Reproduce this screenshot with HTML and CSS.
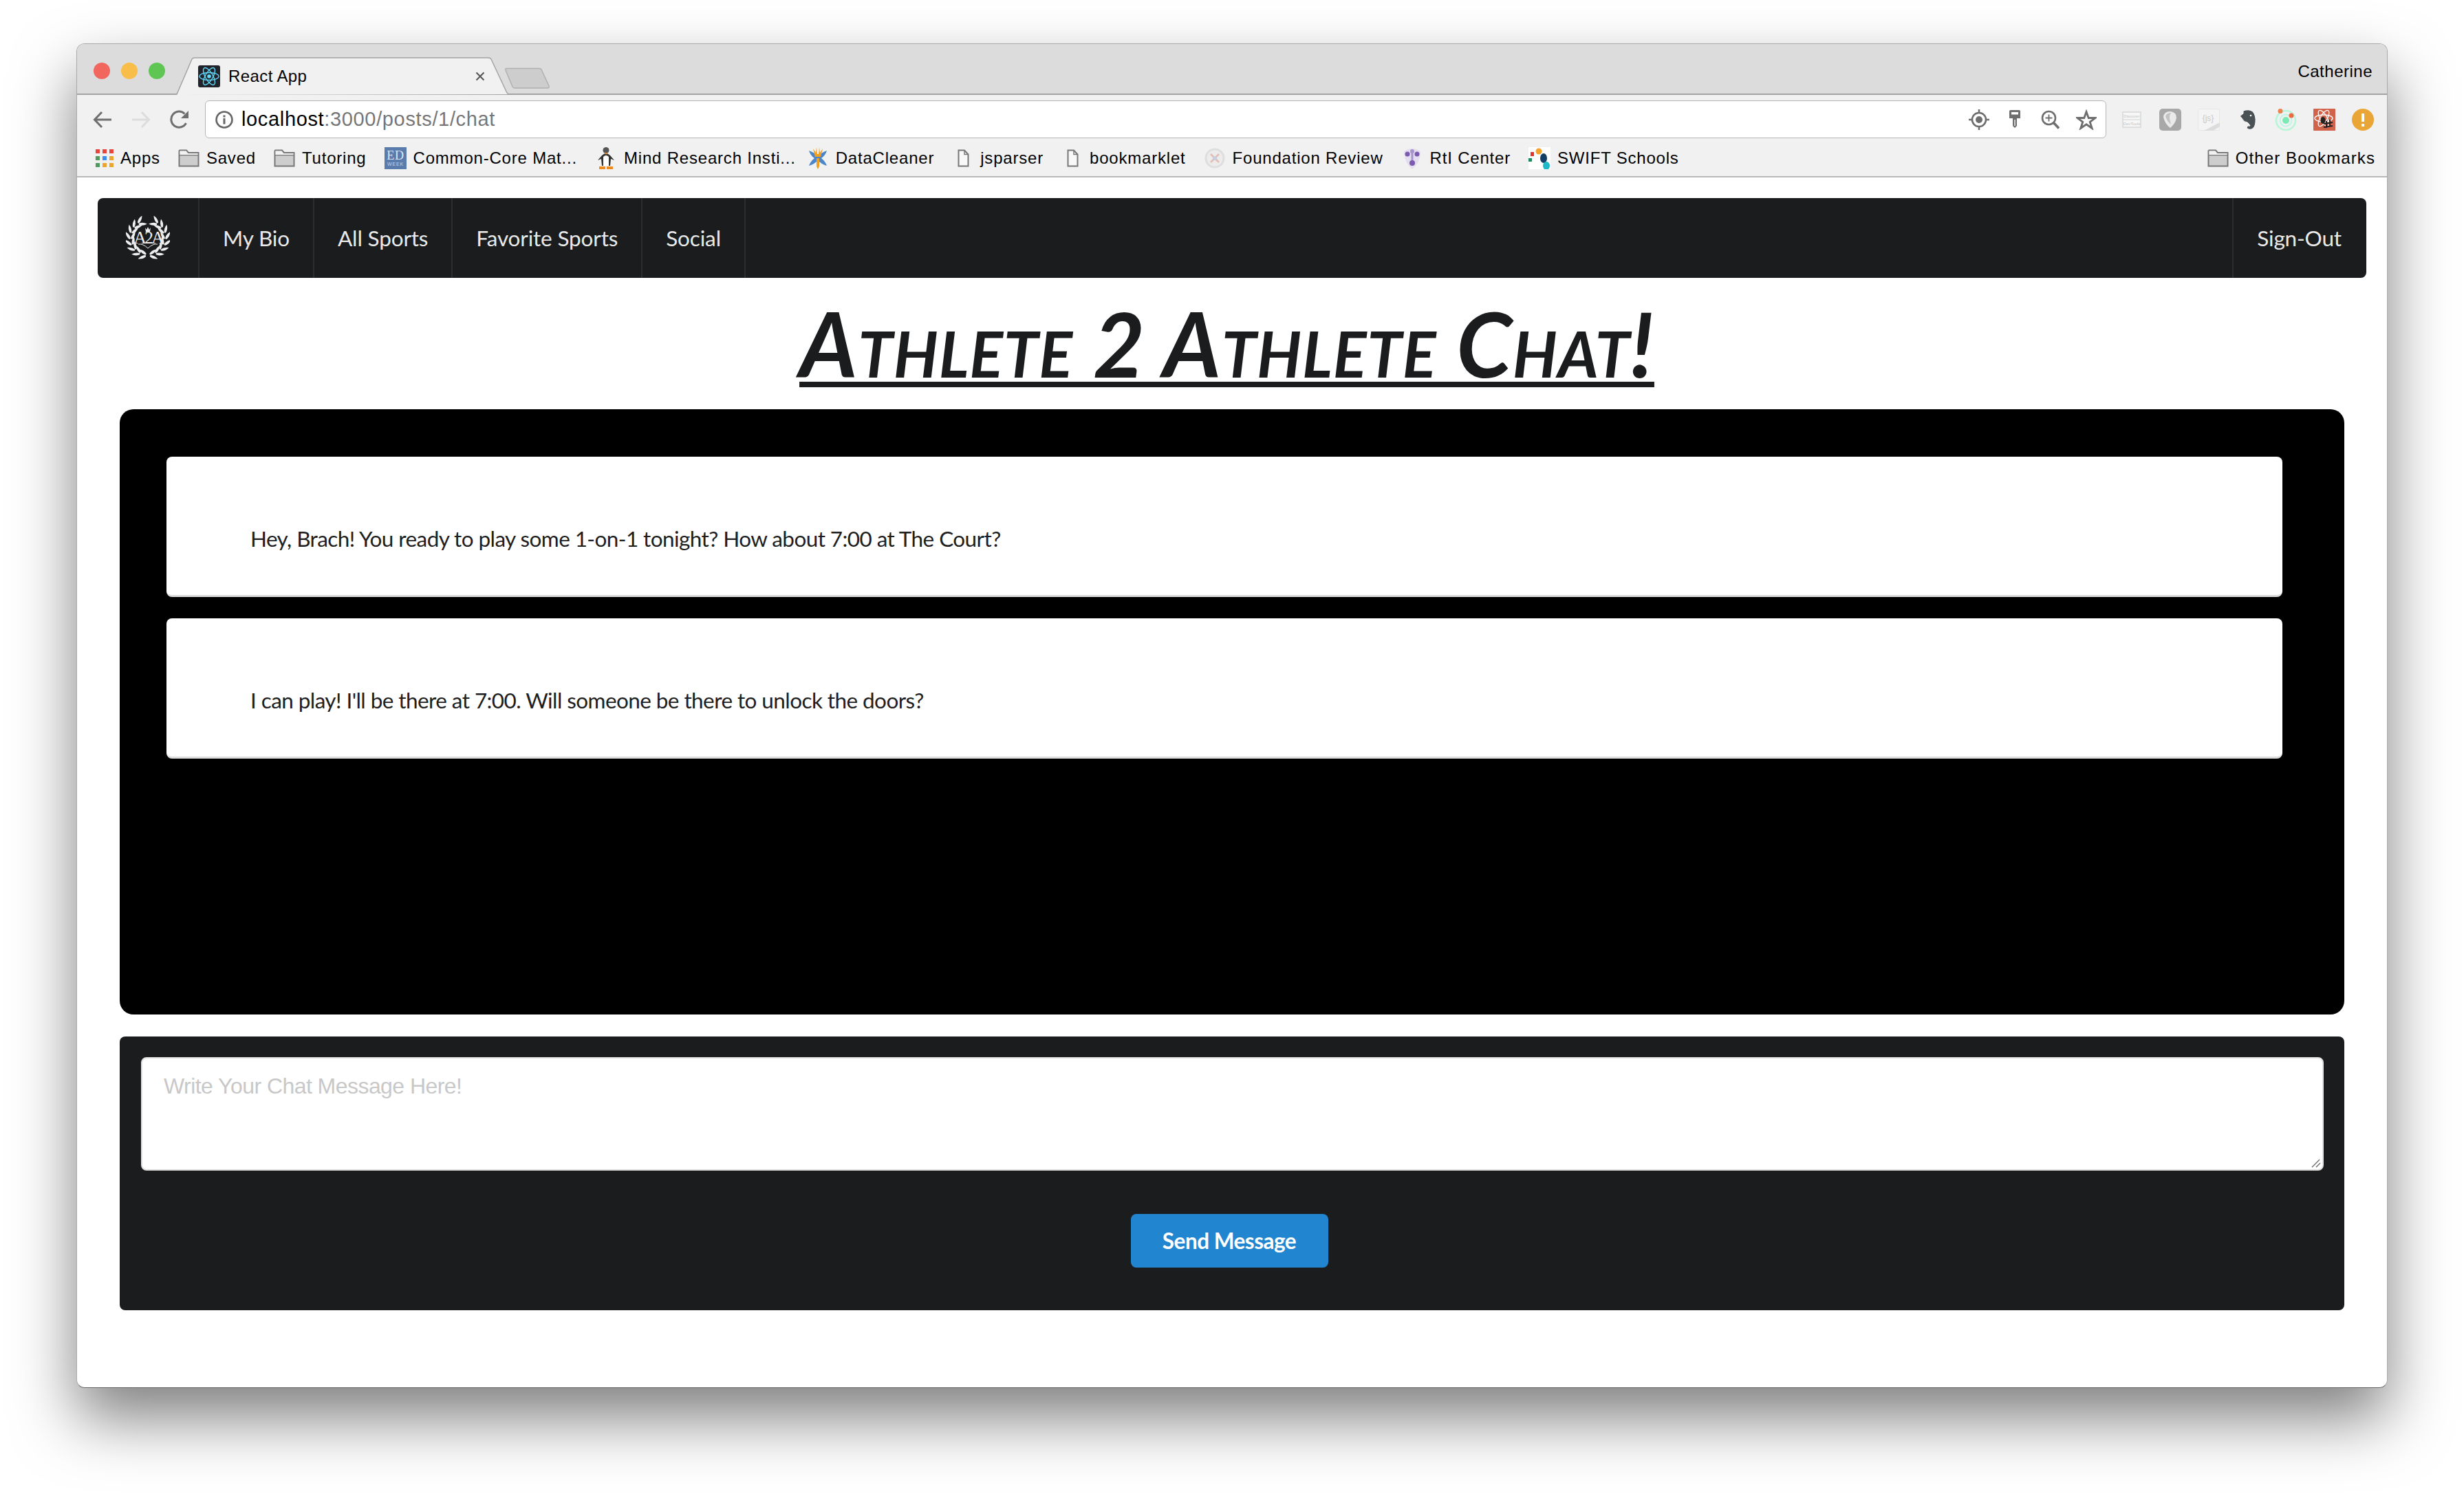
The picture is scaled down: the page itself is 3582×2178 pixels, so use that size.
FILE: index.html
```html
<!doctype html>
<html lang="en">
<head>
  <meta charset="utf-8">
  <title>React App</title>
  <link rel="stylesheet" href="styles.css">
</head>
<body>
  <div class="window">
    <div class="tabstrip">
      <div class="lights"><span class="light red"></span><span class="light yellow"></span><span class="light green"></span></div>
      <div class="tab">
        <svg class="tab-shape" viewBox="0 0 484 55"><path d="M0 55 L1 54 L23 3 Q24 1 27 1 H454 Q457 1 458 3 L480 50 Q482 54 484 54" fill="#f1f1f1" stroke="#a3a3a3" stroke-width="1.5"/></svg>
        <svg class="favicon" viewBox="0 0 32 32"><rect width="32" height="32" rx="3" fill="#20232a"/><g fill="none" stroke="#61dafb" stroke-width="1.4"><ellipse cx="16" cy="16" rx="14" ry="5.5"/><ellipse cx="16" cy="16" rx="14" ry="5.5" transform="rotate(60 16 16)"/><ellipse cx="16" cy="16" rx="14" ry="5.5" transform="rotate(120 16 16)"/></g><circle cx="16" cy="16" r="2.8" fill="#61dafb"/></svg>
        <span class="tab-title">React App</span>
        <svg class="tab-close" viewBox="0 0 14 14"><path d="M1.500 1.500L12.500 12.500M12.500 1.500L1.500 12.500" stroke="#555" stroke-width="2"/></svg>
      </div>
      <svg class="newtab" viewBox="0 0 65 31"><path d="M2 1.500H50Q52 1.500 53 3L64 27Q64.500 30 62 30H14Q12 30 11 28L1 4Q0.500 1.500 2 1.500Z" fill="#cdcdcd" stroke="#b0b0b0" stroke-width="1.500"/></svg>
      <span class="profile">Catherine</span>
    </div>

    <div class="toolbar">
      <svg class="navicon" viewBox="0 0 28 28"><path d="M27 14H3M13 3L2.500 14L13 25" fill="none" stroke="#6f6f6f" stroke-width="3"/></svg>
      <svg class="navicon" viewBox="0 0 28 28"><path d="M1 14H25M15 3L25.500 14L15 25" fill="none" stroke="#dcdcdc" stroke-width="3"/></svg>
      <svg class="navicon" viewBox="0 0 28 28"><path d="M23.500 19A11.500 11.500 0 1 1 21.500 5.500" fill="none" stroke="#6f6f6f" stroke-width="3"/><path d="M27 1V12H16Z" fill="#6f6f6f"/></svg>
      <div class="omnibox">
        <svg class="info" viewBox="0 0 26 26"><circle cx="13" cy="13" r="11.500" fill="none" stroke="#666" stroke-width="2.600"/><path d="M11.500 6.500h3v3h-3zM11.500 11h3v8.500h-3z" fill="#666"/></svg>
        <span class="url"><span class="url-host">localhost</span>:3000/posts/1/chat</span>
        <div class="omni-icons">
          <svg class="omni-icon" viewBox="0 0 30 30"><circle cx="15" cy="15" r="10" fill="none" stroke="#6e6e6e" stroke-width="2.600"/><circle cx="15" cy="15" r="5" fill="#6e6e6e"/><path d="M15 0v5M15 25v5M0 15h5M25 15h5" stroke="#6e6e6e" stroke-width="2.600"/></svg>
          <svg class="omni-icon" viewBox="0 0 30 30"><path d="M7 2.500Q7 1 9 1H21Q23 1 23 2.500V13H18V24L15 27L12 24V13H7Z" fill="#6e6e6e"/><rect x="10" y="4" width="10" height="3.500" fill="#fff"/><rect x="14" y="15" width="2" height="9" fill="#ccc"/></svg>
          <svg class="omni-icon" viewBox="0 0 30 30"><circle cx="12.500" cy="12.500" r="9.500" fill="none" stroke="#6e6e6e" stroke-width="2.600"/><path d="M12.500 7.500v10M7.500 12.500h10" stroke="#6e6e6e" stroke-width="1.800"/><path d="M19.500 19.500L27 27.500" stroke="#6e6e6e" stroke-width="3.500"/></svg>
          <svg class="omni-icon" viewBox="0 0 30 30"><path d="M15 3.500L18.200 12.500H28L20.200 18.300L23.200 27.500L15 21.800L6.800 27.500L9.800 18.300L2 12.500H11.800Z" fill="none" stroke="#6e6e6e" stroke-width="2.800"/></svg>
        </div>
      </div>
      <div class="extensions">
        <svg class="ext" viewBox="0 0 32 32"><rect x="3" y="5" width="26" height="22" fill="#f7f7f7" stroke="#dedede" stroke-width="2"/><path d="M3 16h26" stroke="#dedede" stroke-width="1.500"/><text x="16" y="13" class="ext-tiny">Discover</text><text x="16" y="24" class="ext-tiny">DevTools</text></svg>
        <svg class="ext" viewBox="0 0 32 32"><rect width="32" height="32" rx="5" fill="#a8a8a8"/><path d="M6 12Q7 4 16 4Q25 5 25 13Q24 21 16 28Q8 22 6 12Z" fill="#eaeaea"/><path d="M9 11Q11 6 17 6Q13 11 17 23Q11 18 9 11Z" fill="#c2c2c2"/></svg>
        <svg class="ext" viewBox="0 0 32 32"><rect x="0.500" y="0.500" width="31" height="31" rx="2" fill="#f4f4f4" stroke="#e6e6e6"/><text x="15" y="18" class="ext-js">{js}</text><path d="M9 32L32 20V26L22 32Z" fill="#dcdcdc"/></svg>
        <svg class="ext" viewBox="0 0 32 32"><path d="M10 3Q18 0 24 4Q29 10 28 20Q27 28 22 30Q16 31 15 27Q16 24 20 25Q18 21 16 20Q11 20 8 14Q7 12 5 11L10 7Z" fill="#4b5256" stroke="#fff" stroke-width="1"/><circle cx="21" cy="10" r="1.300" fill="#fff"/></svg>
        <svg class="ext" viewBox="0 0 32 32"><circle cx="16" cy="17" r="14" fill="none" stroke="#b5f5d8" stroke-width="2.500"/><circle cx="16" cy="17" r="8.500" fill="none" stroke="#bdf6e6" stroke-width="2"/><circle cx="16" cy="17" r="5" fill="#7ceab4"/><circle cx="8" cy="3.500" r="3.500" fill="#f0824f"/><circle cx="24" cy="10" r="3.500" fill="#ec6a3f"/></svg>
        <svg class="ext" viewBox="0 0 32 32"><rect width="32" height="32" rx="1" fill="#d1634a"/><g fill="none" stroke="#fff" stroke-width="1.300"><ellipse cx="15" cy="14" rx="13" ry="5"/><ellipse cx="15" cy="14" rx="13" ry="5" transform="rotate(60 15 14)"/><ellipse cx="15" cy="14" rx="13" ry="5" transform="rotate(120 15 14)"/></g><ellipse cx="14" cy="17" rx="3.500" ry="5" fill="#222"/><path d="M19 18v10M24 16v10M15 22l13-2M15 27l13-2" stroke="#222" stroke-width="2"/></svg>
        <svg class="ext" viewBox="0 0 32 32"><circle cx="16" cy="16" r="16" fill="#e9a636"/><path d="M14 7h4v12h-4zM14 22h4v4h-4z" fill="#fff"/></svg>
      </div>
    </div>

    <div class="bookmarks">
      <a class="mark">
        <svg class="mark-icon" viewBox="0 0 26 26"><path d="M0 0h6v6H0z M10 0h6v6h-6z M20 0h6v6h-6z" fill="#e8453c"/><path d="M0 10h6v6H0z M0 20h6v6H0z" fill="#4f9a5d"/><path d="M10 10h6v6h-6z" fill="#3d8ef0"/><path d="M20 10h6v6h-6z M10 20h6v6h-6z M20 20h6v6h-6z" fill="#eba52f"/></svg>
        Apps
      </a>
      <a class="mark"><svg class="mark-icon folder" viewBox="0 0 31 26"><use href="#folder"/></svg>Saved</a>
      <a class="mark"><svg class="mark-icon folder" viewBox="0 0 31 26"><use href="#folder"/></svg>Tutoring</a>
      <a class="mark">
        <svg class="mark-icon square" viewBox="0 0 32 32"><rect width="32" height="32" fill="#5a7cad"/><text x="16" y="18" class="ed-big">ED</text><text x="16" y="27" class="ed-small">WEEK</text></svg>
        Common-Core Mat...
      </a>
      <a class="mark">
        <svg class="mark-icon square" viewBox="0 0 32 32"><circle cx="16" cy="4.500" r="4.500" fill="#555"/><path d="M10 12Q16 6 22 12L28 19L23 17L22 27H10L9 17L4 19Z" fill="#333"/><path d="M12 14Q16 10 20 14V27H12Z" fill="#fff"/><path d="M14 8h4l-2 3z M6 28h9v4H6z M17 28h9v4h-9z" fill="#ee8a1e"/></svg>
        Mind Research Insti...
      </a>
      <a class="mark mark-tight">
        <svg class="mark-icon square" viewBox="0 0 32 32"><path d="M3 5Q12 8 16 14Q20 8 29 5Q27 12 21 16Q27 21 29 27Q20 24 16 19Q12 24 3 27Q5 21 11 16Q5 12 3 5Z" fill="#4a86c8"/><path d="M14 0l1 10h2l1-10 1 8 4-6-3 12h-8L9 2l4 6zM14 16h4v12l-2 4-2-4z" fill="#efa022"/></svg>
        DataCleaner
      </a>
      <a class="mark"><svg class="mark-icon page" viewBox="0 0 17 26"><use href="#page"/></svg>jsparser</a>
      <a class="mark"><svg class="mark-icon page" viewBox="0 0 17 26"><use href="#page"/></svg>bookmarklet</a>
      <a class="mark">
        <svg class="mark-icon square" viewBox="0 0 32 32"><circle cx="16" cy="16" r="13" fill="#ececec" stroke="#dedede" stroke-width="3"/><path d="M10 10L22 22M22 10L10 22" stroke="#e3bcb4" stroke-width="2.500"/><circle cx="16" cy="16" r="3" fill="#c5cfe0"/></svg>
        Foundation Review
      </a>
      <a class="mark">
        <svg class="mark-icon square" viewBox="0 0 32 32"><path d="M4 6Q16 -2 28 6Q28 22 16 32Q4 22 4 6Z" fill="#e4dcef"/><circle cx="9" cy="10" r="3.500" fill="#7a5bb0"/><circle cx="23" cy="10" r="3.500" fill="#7a5bb0"/><circle cx="16" cy="6" r="3" fill="#a593cb"/><circle cx="16" cy="23" r="4" fill="#7a5bb0"/><rect x="14.500" y="8" width="3" height="11" fill="#a593cb"/></svg>
        RtI Center
      </a>
      <a class="mark">
        <svg class="mark-icon square" viewBox="0 0 32 32"><rect width="32" height="32" fill="#fff"/><rect x="3" y="7" width="5" height="6" fill="#e0382e"/><rect x="0" y="16" width="5" height="5" fill="#1f8a5e"/><circle cx="15" cy="6" r="4.500" fill="#f4a42b"/><ellipse cx="22" cy="16" rx="5" ry="7" fill="#123f63"/><ellipse cx="26" cy="27" rx="5" ry="6" fill="#1fb8c8"/></svg>
        SWIFT Schools
      </a>
      <a class="mark mark-other"><svg class="mark-icon folder" viewBox="0 0 31 26"><use href="#folder"/></svg>Other Bookmarks</a>
    </div>

    <main class="page-body">
      <nav class="menu">
        <a class="menu-item menu-logo">
          <svg class="logo" viewBox="-32 -32 64 64">
            <defs>
              <path id="leaf" d="M0 0Q-6 -1 -10 -7Q-3 -7 1 -2Z"/>
              <g id="pair"><use href="#leaf"/><use href="#leaf" transform="scale(1 -1)"/></g>
              <g id="branch" fill="#eee">
                <use href="#pair" transform="rotate(32) translate(0 -25)"/>
                <use href="#pair" transform="rotate(52) translate(0 -25)"/>
                <use href="#pair" transform="rotate(72) translate(0 -25)"/>
                <use href="#pair" transform="rotate(92) translate(0 -25)"/>
                <use href="#pair" transform="rotate(112) translate(0 -25)"/>
                <use href="#pair" transform="rotate(132) translate(0 -25)"/>
                <use href="#pair" transform="rotate(152) translate(0 -25)"/>
                <use href="#pair" transform="rotate(172) translate(0 -25)"/>
              </g>
            </defs>
            <use href="#branch"/>
            <use href="#branch" transform="scale(-1 1)"/>
            <path d="M-4 -15l2 3 2 -4 2 4 2 -3 -1 6h-6z" fill="#eee"/>
            <text x="0" y="8" class="logo-text">A2A</text>
            <path d="M-14 9Q-7 8 0 15Q7 8 14 9" fill="none" stroke="#eee" stroke-width="1"/>
          </svg>
        </a>
        <a class="menu-item">My Bio</a>
        <a class="menu-item">All Sports</a>
        <a class="menu-item">Favorite Sports</a>
        <a class="menu-item">Social</a>
        <a class="menu-item menu-right">Sign-Out</a>
      </nav>

      <h1 class="chat-title">Athlete 2 Athlete Chat!</h1>

      <section class="messages">
        <div class="message">Hey, Brach! You ready to play some 1-on-1 tonight? How about 7:00 at The Court?</div>
        <div class="message">I can play! I'll be there at 7:00. Will someone be there to unlock the doors?</div>
      </section>

      <form class="chat-form">
        <div class="input-wrap">
          <textarea class="chat-input" placeholder="Write Your Chat Message Here!"></textarea>
          <svg class="grip" viewBox="0 0 14 14"><path d="M1 13L12 2M7 13L13 7" stroke="#666" stroke-width="1.300"/></svg>
        </div>
        <div class="form-actions"><button class="send" type="button">Send Message</button></div>
      </form>
    </main>
  </div>

  <svg class="defs" width="0" height="0">
    <defs>
      <g id="folder"><path d="M1.500 24.500V2.500Q1.500 1.500 2.500 1.500H12L15 5H29.500V24.500Z" fill="#cdcdcd" stroke="#777" stroke-width="2"/><path d="M1.500 8.500H29.500" stroke="#777" stroke-width="1.500"/><path d="M2.500 2.500H11.500L14 6H28.500V8H2.500Z" fill="#f2f2f2"/></g>
      <g id="page"><path d="M1.500 1.500H10L15.500 7.500V24.500H1.500Z" fill="#f8f8f8" stroke="#777" stroke-width="2"/><path d="M10 1.500V7.500H15.500" fill="none" stroke="#777" stroke-width="1.500"/></g>
    </defs>
  </svg>
</body>
</html>
```

FILE: styles.css
```css
* {
  box-sizing: border-box;
}
html, body {
  height: 100%;
  margin: 0;
}
body {
  background-color: #fff;
  color: #000;
  font-family: "Liberation Sans", Arial, sans-serif;
  overflow: hidden;
  padding: 63px 0 0 111px;
}
.defs {
  display: block;
}
.window {
  background-color: #fff;
  border: 1px solid #aaa;
  border-bottom-color: #666;
  border-radius: 12px;
  box-shadow: 0 44px 90px rgba(0, 0, 0, .5);
  display: flex;
  flex-direction: column;
  height: 1955px;
  overflow: hidden;
  width: 3360px;
}

/* browser chrome */
.tabstrip {
  align-items: flex-end;
  background-color: #dcdcdc;
  border-bottom: 2px solid #a3a3a3;
  display: flex;
  flex-shrink: 0;
  height: 74px;
}
.lights {
  display: flex;
  gap: 16px;
  margin: 0 16px 21px 24px;
}
.light {
  border-radius: 50%;
  height: 24px;
  width: 24px;
}
.red { background-color: #f1665d; }
.yellow { background-color: #f9bd4a; }
.green { background-color: #5fc653; }
.tab {
  align-items: center;
  display: flex;
  font-size: 24px;
  height: 55px;
  margin-bottom: -2px;
  padding: 0 35px 0 32px;
  position: relative;
  width: 484px;
}
.tab-shape {
  height: 55px;
  left: 0;
  position: absolute;
  top: 0;
  width: 484px;
}
.favicon {
  height: 32px;
  position: relative;
  width: 32px;
}
.tab-title {
  letter-spacing: .4px;
  margin-left: 12px;
  position: relative;
}
.tab-close {
  height: 14px;
  margin-left: auto;
  position: relative;
  width: 14px;
}
.newtab {
  height: 31px;
  margin: 0 0 7px -6px;
  width: 65px;
}
.profile {
  font-size: 24px;
  letter-spacing: .5px;
  margin: 0 21px 18px auto;
}
.toolbar {
  align-items: center;
  background-color: #f1f1f1;
  display: flex;
  flex-shrink: 0;
  height: 68px;
  padding: 3px 0 0 23px;
}
.navicon {
  height: 28px;
  margin-right: 28px;
  width: 28px;
}
.omnibox {
  align-items: center;
  background-color: #fff;
  border: 1px solid #b5b5b5;
  border-radius: 6px;
  display: flex;
  height: 55px;
  margin-left: -5px;
  padding: 0 13px 0 14px;
  width: 2764px;
}
.info {
  height: 26px;
  width: 26px;
}
.url {
  color: #777;
  font-size: 29px;
  letter-spacing: .65px;
  margin-left: 12px;
}
.url-host {
  color: #000;
}
.omni-icons {
  align-items: center;
  display: flex;
  gap: 22px;
  margin-left: auto;
}
.omni-icon {
  height: 30px;
  width: 30px;
}
.extensions {
  align-items: center;
  display: flex;
  gap: 24px;
  margin-left: 21px;
}
.ext {
  height: 32px;
  width: 32px;
}
.ext-tiny {
  fill: #c4c4c4;
  font-size: 6px;
  text-anchor: middle;
}
.ext-js {
  fill: #c8c8c8;
  font-size: 12px;
  text-anchor: middle;
}
.bookmarks {
  align-items: center;
  background-color: #f1f1f1;
  border-bottom: 2px solid #b8b8b8;
  display: flex;
  flex-shrink: 0;
  font-size: 24px;
  gap: 26px;
  height: 52px;
  letter-spacing: .8px;
  padding: 0 17px 2px 27px;
}
.mark {
  align-items: center;
  display: flex;
  gap: 10px;
  white-space: nowrap;
}
.mark-tight {
  margin-left: -10px;
}
.mark-icon {
  flex-shrink: 0;
  height: 26px;
  width: 26px;
}
.folder {
  width: 31px;
}
.square {
  height: 32px;
  width: 32px;
}
.page {
  margin: 0 6px 0 8px;
  width: 17px;
}
.mark-other {
  letter-spacing: 1.1px;
  margin-left: auto;
}
.ed-big {
  fill: #dfe6f2;
  font-family: "Liberation Serif", serif;
  font-size: 18px;
  text-anchor: middle;
}
.ed-small {
  fill: #c9d5e8;
  font-size: 7px;
  text-anchor: middle;
}

/* app */
.page-body {
  flex-grow: 1;
  font-family: Lato, sans-serif;
  padding: 30px 30px 0 30px;
}
.menu {
  background-color: #1b1c1d;
  border-radius: 8px;
  color: #e9e9e9;
  display: flex;
  font-size: 31.5px;
  height: 116px;
  letter-spacing: -.15px;
}
.menu-item {
  align-items: center;
  border-right: 2px solid #2c2d2e;
  display: flex;
  padding: 0 34px;
}
.menu-logo {
  padding: 0 41px;
}
.logo {
  height: 64px;
  width: 64px;
}
.logo-text {
  fill: #eee;
  font-family: "Liberation Serif", serif;
  font-size: 26px;
  letter-spacing: -3px;
  text-anchor: middle;
}
.menu-right {
  border-left: 2px solid #2c2d2e;
  border-right: 0;
  margin-left: auto;
  padding-right: 36px;
}
.chat-title {
  color: #1b1c1d;
  font-family: Lato, sans-serif;
  font-size: 130px;
  font-style: italic;
  font-variant: small-caps;
  font-weight: 700;
  height: 191px;
  letter-spacing: .7px;
  line-height: 191px;
  margin: 0;
  padding-right: 15px;
  text-align: center;
  text-decoration: underline;
  text-decoration-thickness: 8px;
  text-underline-offset: 6px;
  white-space: nowrap;
}
.messages {
  background-color: #000;
  border-radius: 20px;
  display: flex;
  flex-direction: column;
  gap: 31px;
  height: 880px;
  margin: 0 32px;
  padding: 69px 90px 0 68px;
}
.message {
  background-color: #fff;
  border-bottom: 3px solid #ddd;
  border-radius: 8px;
  color: #1e1e1e;
  font-size: 31.5px;
  height: 204px;
  letter-spacing: -.58px;
  line-height: 40px;
  padding: 99px 122px 0;
}
.chat-form {
  background-color: #1b1c1d;
  border-radius: 8px;
  height: 398px;
  margin: 32px 32px 0;
  padding: 30px 30px 0 31px;
}
.input-wrap {
  position: relative;
}
.chat-input {
  background-color: #fff;
  border: 2px solid #e0e0e0;
  border-radius: 8px;
  display: block;
  font-family: "Liberation Sans", Arial, sans-serif;
  font-size: 32px;
  height: 165px;
  letter-spacing: -.55px;
  outline: 0;
  padding: 22px 31px;
  resize: none;
  width: 100%;
}
.chat-input::placeholder {
  color: #c8c8c8;
  opacity: 1;
}
.grip {
  bottom: 4px;
  height: 14px;
  position: absolute;
  right: 4px;
  width: 14px;
}
.form-actions {
  display: flex;
  justify-content: center;
  margin-top: 63px;
  padding-right: 9px;
}
.send {
  background-color: #2185d0;
  border: 0;
  border-radius: 8px;
  color: #fff;
  font-family: Lato, sans-serif;
  font-size: 31.5px;
  font-weight: 700;
  height: 78px;
  letter-spacing: -.5px;
  width: 287px;
}
```
